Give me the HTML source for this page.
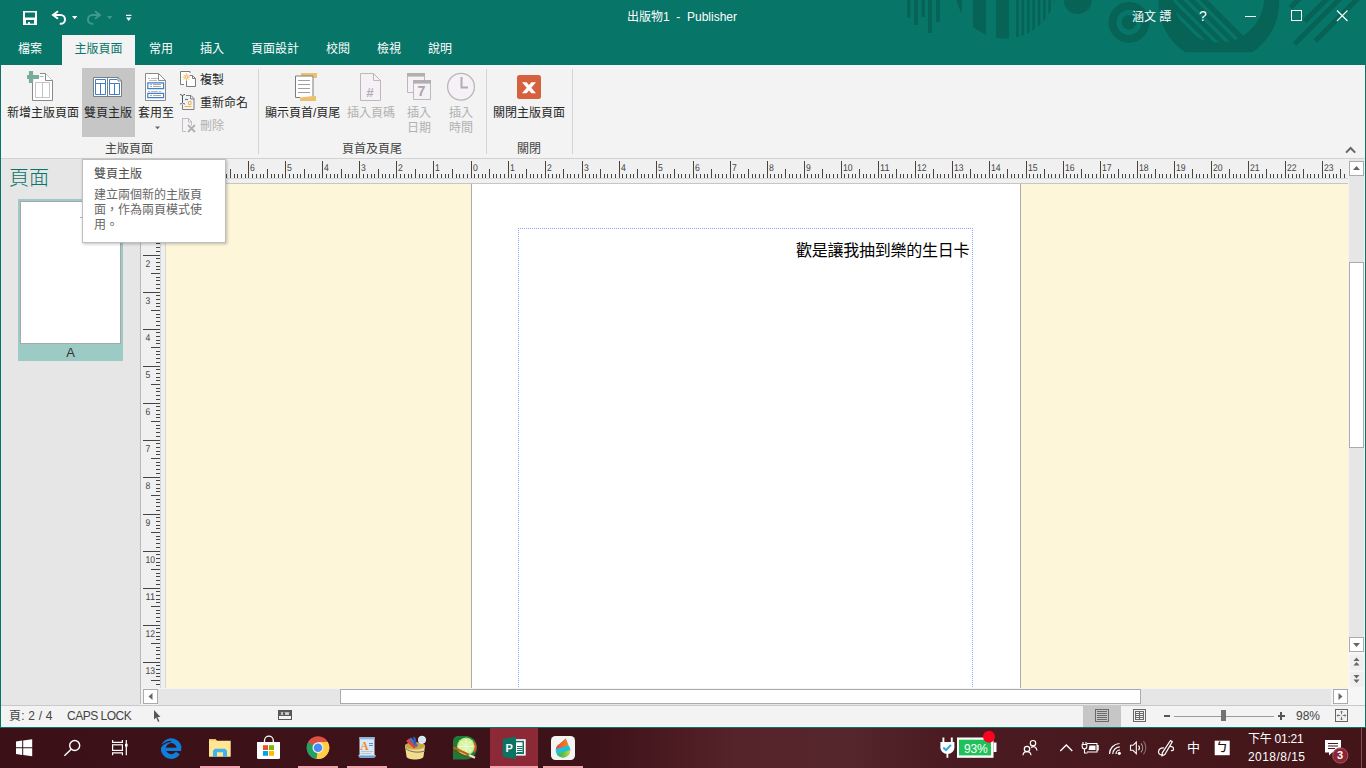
<!DOCTYPE html>
<html lang="zh-Hant">
<head>
<meta charset="utf-8">
<title>出版物1 - Publisher</title>
<style>
html,body{margin:0;padding:0;}
body{width:1366px;height:768px;overflow:hidden;position:relative;background:#f3f3f3;
 font-family:"Liberation Sans","Noto Sans CJK TC",sans-serif;font-size:12px;color:#262626;}
.abs{position:absolute;}
svg{position:absolute;left:0;top:0;overflow:visible;}
#titlebar{left:0;top:0;width:1366px;height:65px;background:#077568;overflow:hidden;}
#titlebar .t{position:absolute;color:#fff;white-space:nowrap;line-height:14px;}
.tab{position:absolute;top:35px;height:30px;line-height:29px;color:#fff;font-size:12px;text-align:center;white-space:nowrap;}
.tab.act{background:#f3f3f3;color:#077568;}
#ribbon{left:1px;top:65px;width:1364px;height:93px;background:#f3f3f3;border-bottom:1px solid #d2d2d2;}
.rl{position:absolute;white-space:nowrap;font-size:12px;color:#262626;line-height:14px;}
.rl.dis{color:#b1b1b1;}
.rl.c{text-align:center;}
.gl{position:absolute;top:142px;font-size:12px;color:#444;white-space:nowrap;line-height:14px;}
.sep{position:absolute;top:69px;width:1px;height:85px;background:#d4d4d4;}
#pages{left:1px;top:159px;width:139px;height:546px;background:#e6e6e6;}
#canvas{left:166px;top:184px;width:1182px;height:504px;background:#fef6d9;overflow:hidden;}
#status{left:1px;top:705px;width:1364px;height:22px;background:#f3f3f3;}
.st{position:absolute;font-size:12px;color:#444;white-space:nowrap;line-height:14px;}
#taskbar{left:0;top:728px;width:1366px;height:40px;background:linear-gradient(90deg,#3b1117 0%,#3e1219 44%,#4c1c22 50%,#54242a 54%,#55262b 62%,#4a1b20 69%,#431519 100%);overflow:hidden;}
.tk{position:absolute;color:#fff;white-space:nowrap;}
.ul{position:absolute;top:38px;height:2px;background:#f2a3b0;}
.rn{text-rendering:geometricPrecision;font-size:9.8px;fill:#444;font-family:"Liberation Sans",sans-serif;}
</style>
</head>
<body>
<!-- TITLEBAR -->
<div id="titlebar" class="abs">
  <svg width="1366" height="65" viewBox="0 0 1366 65">
    <g fill="#066356">
      <!-- vertical bars -->
      <rect x="907" y="0" width="3.5" height="17.5"/><rect x="914" y="0" width="4" height="25"/>
      <rect x="921.5" y="0" width="3.5" height="17"/><rect x="928" y="0" width="4" height="33"/><rect x="936" y="0" width="4" height="22"/>
      <!-- striped disc -->
      <clipPath id="cd"><circle cx="1005.5" cy="-12" r="50.5"/></clipPath>
      <g clip-path="url(#cd)">
        <polygon points="955,0 962,0 962,16"/>
        <rect x="973" y="0" width="13" height="40"/><rect x="996" y="0" width="13" height="40"/>
        <rect x="1016" y="0" width="2.6" height="40"/><rect x="1021.6" y="0" width="2.6" height="40"/><rect x="1027" y="0" width="2.6" height="40"/>
        <rect x="1032.4" y="0" width="2.6" height="40"/><rect x="1037.8" y="0" width="2.6" height="40"/><rect x="1043" y="0" width="2.6" height="40"/>
        <rect x="1048.4" y="0" width="2.6" height="40"/><rect x="1053.6" y="0" width="2.6" height="40"/>
      </g>
      <circle cx="1077.7" cy="0" r="14"/>
      <!-- target -->
      <path fill-rule="evenodd" d="M1129 2a20.4 20.4 0 1 0 .01 0zM1129 9.8a12.6 12.6 0 1 1 -.01 0z"/>
      <circle cx="1129" cy="22.4" r="7.3"/>
      <!-- bowl -->
      <clipPath id="cb"><rect x="1150" y="0" width="140" height="52.3"/></clipPath>
      <clipPath id="cin"><circle cx="1218.8" cy="-3" r="45.6"/></clipPath>
      <g clip-path="url(#cb)">
        <circle cx="1218.8" cy="2.1" r="60.4"/>
        <g clip-path="url(#cin)">
          <polygon points="1207.3,0 1300,0 1300,92.7" fill="#077568"/>
          <g stroke="#077568" stroke-width="3.5" fill="none">
            <path d="M1140.800 -10L1240.800 90M1152.400 -10L1252.400 90M1164 -10L1264 90M1175.600 -10L1275.600 90M1187.300 -10L1287.300 90"/>
          </g>
        </g>
      </g>
    </g>
    <!-- right diagonals -->
    <g stroke="#066356" stroke-width="5" fill="none">
      <path d="M1300 -2L1290.500 7.500M1328 -2L1304.500 21.500M1340.600 -2L1294.600 44M1358.300 -2L1315.300 41"/>
    </g>
    <!-- QAT icons -->
    <rect x="23" y="11" width="14" height="14" fill="#fff"/>
    <rect x="25" y="12.500" width="10" height="5" fill="#077568"/>
    <rect x="26" y="20" width="8" height="3.600" fill="#077568"/>
    <rect x="28" y="22" width="2" height="2" fill="#fff"/>
    <g fill="none" stroke="#fff" stroke-width="2">
      <path d="M58 11.200L53 15l5 3.800"/>
      <path d="M54 15h6.600a4.400 4.400 0 0 1 0 8.800h-.8"/>
    </g>
    <g fill="none" stroke="#3f9a8c" stroke-width="2">
      <path d="M95 11.200L100 15l-5 3.800"/>
      <path d="M99 15h-6.600a4.400 4.400 0 0 0 0 8.800h.8"/>
    </g>
    <path fill="#fff" d="M72 16h5.400l-2.700 3.200z"/>
    <path fill="#3f9a8c" d="M107 16h5.400l-2.700 3.200z"/>
    <path fill="#fff" d="M126 14.800h5.400v1.300h-5.400zM126 17.600h5.400l-2.700 3.400z"/>
    <!-- window controls -->
    <g stroke="#fff" stroke-width="1" fill="none" shape-rendering="crispEdges">
      <path d="M1245 16.500h11"/>
      <rect x="1291.500" y="10.500" width="10" height="10"/>
    </g>
    <path d="M1337 10.500l10.500 10.500M1347.500 10.500l-10.500 10.500" stroke="#fff" stroke-width="1.100" fill="none"/>
  </svg>
  <div class="t" style="left:627px;top:10px;font-size:12px;">出版物1 &nbsp;- &nbsp;Publisher</div>
  <div class="t" style="left:1132px;top:10px;font-size:12px;">涵文 譚</div>
  <div class="t" style="left:1199px;top:9px;font-size:14px;">?</div>
  <div class="tab" style="left:17px;width:26px;">檔案</div>
  <div class="tab act" style="left:62px;width:73px;">主版頁面</div>
  <div class="tab" style="left:149px;width:24px;">常用</div>
  <div class="tab" style="left:200px;width:24px;">插入</div>
  <div class="tab" style="left:251px;width:48px;">頁面設計</div>
  <div class="tab" style="left:326px;width:24px;">校閱</div>
  <div class="tab" style="left:377px;width:24px;">檢視</div>
  <div class="tab" style="left:428px;width:24px;">說明</div>
</div>
<!-- RIBBON -->
<div id="ribbon" class="abs"></div>
<div class="abs" style="left:82px;top:68px;width:53px;height:69px;background:#c6c6c6;"></div>
<svg width="1366" height="160" viewBox="0 0 1366 160">
  <!-- new master page -->
  <g fill="none">
    <path d="M32.500 82V100.500h20V80.500l-7-7H40" stroke="#8a8a8a" stroke-width="1" fill="#fff"/>
    <path d="M45.500 73.500v7h7" stroke="#8a8a8a" fill="#fff"/>
    <path d="M35.500 82.500h14v15h-14zM42.500 82.500v15" stroke="#c4c4c4"/>
    <path d="M39.500 76.500h4" stroke="#b0b0b0"/>
    <path d="M31 71v12M27 77h12" stroke="#77ad9a" stroke-width="4.200"/>
  </g>
  <!-- two-page master -->
  <g fill="none">
    <path d="M93.500 77.500h24.500l3.500 3.500v15.500h-28z" fill="#fff" stroke="#7d7d7d"/>
    <path d="M107.500 77.500v19" stroke="#7d7d7d"/>
    <path d="M118 77.500v3.500h3.500" stroke="#7d7d7d"/>
    <g stroke="#3f7fcc" stroke-width="1">
      <path d="M95.500 79.500h10v15h-10zM95.500 83.500h10M100.500 83.500v11"/>
      <path d="M117 79.500h-7.500v15h10v-11.500M109.500 83.500h10M114.500 83.500v11"/>
    </g>
  </g>
  <!-- apply to -->
  <g fill="none">
    <path d="M145.500 73.500h13l7 7v20h-20z" fill="#fff" stroke="#8a8a8a"/>
    <path d="M158.500 73.500v7h7" stroke="#8a8a8a"/>
    <g stroke="#b9b9b9"><path d="M148 78.500h2M151 78.500h7M149 80.500h8M148 91.500h2M151 91.500h7M159 91.500h2"/></g>
    <path d="M147.800 82.800h15.800v5.800h-15.800zM147.800 93.300h15.800v4.400h-15.800z" stroke="#3f7fcc" stroke-width="1.200"/>
    <g stroke="#a9a9a9"><path d="M150 84.500h2M153 84.500h8M150 86.500h2M153 86.500h8M150 95.500h2M153 95.500h8"/></g>
  </g>
  <path d="M155 126.500h5l-2.500 2.800z" fill="#666"/>
  <!-- copy -->
  <g fill="none" stroke="#7d7d7d">
    <path d="M180.500 71.500h9.500v13h-9.500z" fill="#fff" stroke="none"/>
    <path d="M184 84.500h-3.500v-13h9.500M190 71.500v1.500" />
    <path d="M186.500 75.500h6l3 3v8h-9z" fill="#fff"/>
    <path d="M192.500 75.500v3h3" />
    <circle cx="186.300" cy="77" r="3.600" fill="#fff" stroke="none"/>
    <g stroke="#eeb04a" stroke-width=".9"><path d="M186.300 73.300v2.200M186.300 78.500v2.200M182.600 77h2.200M187.800 77h2.200M183.700 74.400l1.500 1.500M187.400 78.100l1.500 1.500M188.900 74.400l-1.500 1.500M185.200 78.100l-1.500 1.500"/><circle cx="186.300" cy="77" r="1.300" fill="none"/></g>
  </g>
  <!-- rename -->
  <g fill="none" stroke="#7d7d7d">
    <path d="M186 95.500h5l3 3v11h-11.500v-5"/>
    <path d="M190.500 95.500v3.500h3.500"/>
    <path d="M180 94.500q2 0 2.500 1.500q0.500 -1.500 2.500 -1.500M182.500 96v6.500M180 104q2 0 2.500 -1.500q0.500 1.500 2.500 1.500" stroke="#555"/>
    <path d="M185 99.500h3" stroke="#3f7fcc" stroke-width="1.200"/>
    <path d="M188.500 101.500h2.500v3h-2.500zM184.500 106.500h7" stroke="#eeb04a"/>
  </g>
  <!-- delete (disabled) -->
  <g fill="none" stroke="#bdbdbd">
    <path d="M182.500 118.500h6l3 3v10h-9z" fill="#f6f1f6" stroke="none"/>
    <path d="M186 131.500h-3.500v-13h6l3 3v4"/>
    <path d="M188.500 118.500v3.500h3.500"/>
    <path d="M188 125l7 7M195 125l-7 7" stroke="#b0b0b0" stroke-width="1.800"/>
  </g>
  <!-- show header/footer -->
  <g fill="none">
    <path d="M301 73h16v5h-3.500v-2h-12.500z" fill="#ecc06f"/>
    <rect x="300" y="96" width="16" height="5" fill="#ecc06f"/>
    <path d="M300 97.500h-4.500v-21.500h17.500v20" stroke="#7d7d7d" fill="#fff"/>
    <g stroke="#a0a0a0"><path d="M298 80.500h12M298 84.500h12M298 88.500h12M298 92.500h12"/></g>
  </g>
  <!-- insert page number (disabled) -->
  <g>
    <path d="M360.500 73.500h13l7 7v20h-20z" fill="#f6f1f6" stroke="#bdb8bd"/>
    <path d="M373.500 73.500v7h7" stroke="#bdb8bd" fill="none"/>
    <text x="366.200" y="96.700" font-family="Liberation Sans,sans-serif" font-weight="bold" font-size="13.500" fill="#b3aeb3">#</text>
  </g>
  <!-- insert date (disabled) -->
  <g>
    <path d="M407.500 73.500h17v19h-17z" fill="#f6f1f6" stroke="#bdb8bd"/>
    <rect x="407" y="73" width="18" height="3.600" fill="#b3aeb3"/>
    <path d="M413.500 80.500h17v19h-17z" fill="#f6f1f6" stroke="#bdb8bd"/>
    <rect x="413" y="80" width="18" height="3.600" fill="#b3aeb3"/>
    <text x="417.600" y="96.400" font-family="Liberation Sans,sans-serif" font-weight="bold" font-size="14.200" fill="#aaa5aa">7</text>
  </g>
  <!-- insert time (disabled) -->
  <g>
    <circle cx="461" cy="86.800" r="13.400" fill="#f6f1f6" stroke="#bab5ba" stroke-width="1.300"/>
    <path d="M461.500 77v10.500h6.500" fill="none" stroke="#b0abb0" stroke-width="2"/>
  </g>
  <!-- close master -->
  <g>
    <rect x="517" y="75" width="24" height="24" rx="2.500" fill="#d6613f"/>
    <path d="M522 82.300h4.600l9.400 10.900h-4.600z" fill="#fff"/><path d="M536 82.300h-4.600l-9.400 10.900h4.600z" fill="#fff"/>
  </g>
  <!-- collapse ribbon chevron -->
  <path d="M1346 152.600l4.600-4.600l4.600 4.600" fill="none" stroke="#666" stroke-width="2"/>
</svg>
<div class="rl" style="left:7px;top:106px;">新增主版頁面</div>
<div class="rl" style="left:84px;top:106px;">雙頁主版</div>
<div class="rl" style="left:138px;top:106px;">套用至</div>
<div class="rl" style="left:200px;top:73px;">複製</div>
<div class="rl" style="left:200px;top:96px;">重新命名</div>
<div class="rl dis" style="left:200px;top:119px;">刪除</div>
<div class="rl" style="left:265px;top:106px;">顯示頁首/頁尾</div>
<div class="rl dis" style="left:347px;top:106px;">插入頁碼</div>
<div class="rl dis c" style="left:407px;top:106px;line-height:15px;">插入<br>日期</div>
<div class="rl dis c" style="left:449px;top:106px;line-height:15px;">插入<br>時間</div>
<div class="rl" style="left:493px;top:106px;">關閉主版頁面</div>
<div class="gl" style="left:105px;">主版頁面</div>
<div class="gl" style="left:342px;">頁首及頁尾</div>
<div class="gl" style="left:517px;">關閉</div>
<div class="sep" style="left:258px;"></div>
<div class="sep" style="left:486px;"></div>
<div class="sep" style="left:572px;"></div>
<!-- PAGES PANEL -->
<div id="pages" class="abs">
  <div class="abs" style="left:8px;top:7px;font-size:20px;line-height:24px;color:#077568;font-weight:300;white-space:nowrap;">頁面</div>
  <div class="abs" style="left:17px;top:40px;width:105px;height:162px;background:#9bcbc4;"></div>
  <div class="abs" style="left:19px;top:42px;width:101px;height:143px;background:#fff;border:1px solid #a8a8a8;box-sizing:border-box;"></div>
  <div class="abs" style="left:17px;top:186px;width:105px;height:16px;line-height:15px;text-align:center;font-size:13px;color:#333;">A</div>
  <div class="abs" style="left:79px;top:58px;width:4px;height:1px;background:#b0b0b0;"></div>
</div>
<!-- RULERS -->
<div class="abs" style="left:141px;top:159px;width:1207px;height:24px;background:#f0f0f0;border-bottom:1px solid #c6c6c6;"></div>
<div class="abs" style="left:166px;top:178px;width:1182px;height:1px;background:#d6d6d6;"></div>
<div class="abs" style="left:140px;top:159px;width:26px;height:545px;background:#f0f0f0;border-left:1px solid #b8b8b8;box-sizing:border-box;"></div>
<div class="abs" style="left:165px;top:184px;width:1px;height:504px;background:#d8d8d8;"></div>
<div class="abs" style="left:160px;top:184px;width:1px;height:504px;background:#d6d6d6;"></div>
<svg width="1366" height="768" viewBox="0 0 1366 768"><g stroke="#444" stroke-width="1" fill="none" shape-rendering="crispEdges">
<path d="M167.5 174V178M171.5 174V178M174.5 161V178M178.5 174V178M182.5 174V178M186.5 174V178M189.5 174V178M193.5 169V178M197.5 174V178M200.5 174V178M204.5 174V178M208.5 174V178M211.5 161V178M215.5 174V178M219.5 174V178M223.5 174V178M226.5 174V178M230.5 169V178M234.5 174V178M237.5 174V178M241.5 174V178M245.5 174V178M248.5 161V178M252.5 174V178M256.5 174V178M260.5 174V178M263.5 174V178M267.5 169V178M271.5 174V178M274.5 174V178M278.5 174V178M282.5 174V178M285.5 161V178M289.5 174V178M293.5 174V178M297.5 174V178M300.5 174V178M304.5 169V178M308.5 174V178M311.5 174V178M315.5 174V178M319.5 174V178M322.5 161V178M326.5 174V178M330.5 174V178M334.5 174V178M337.5 174V178M341.5 169V178M345.5 174V178M348.5 174V178M352.5 174V178M356.5 174V178M359.5 161V178M363.5 174V178M367.5 174V178M371.5 174V178M374.5 174V178M378.5 169V178M382.5 174V178M385.5 174V178M389.5 174V178M393.5 174V178M396.5 161V178M400.5 174V178M404.5 174V178M408.5 174V178M411.5 174V178M415.5 169V178M419.5 174V178M422.5 174V178M426.5 174V178M430.5 174V178M433.5 161V178M437.5 174V178M441.5 174V178M445.5 174V178M448.5 174V178M452.5 169V178M456.5 174V178M459.5 174V178M463.5 174V178M467.5 174V178M471.5 161V178M474.5 174V178M478.5 174V178M482.5 174V178M485.5 174V178M489.5 169V178M493.5 174V178M496.5 174V178M500.5 174V178M504.5 174V178M508.5 161V178M511.5 174V178M515.5 174V178M519.5 174V178M522.5 174V178M526.5 169V178M530.5 174V178M533.5 174V178M537.5 174V178M541.5 174V178M545.5 161V178M548.5 174V178M552.5 174V178M556.5 174V178M559.5 174V178M563.5 169V178M567.5 174V178M570.5 174V178M574.5 174V178M578.5 174V178M582.5 161V178M585.5 174V178M589.5 174V178M593.5 174V178M596.5 174V178M600.5 169V178M604.5 174V178M607.5 174V178M611.5 174V178M615.5 174V178M619.5 161V178M622.5 174V178M626.5 174V178M630.5 174V178M633.5 174V178M637.5 169V178M641.5 174V178M644.5 174V178M648.5 174V178M652.5 174V178M656.5 161V178M659.5 174V178M663.5 174V178M667.5 174V178M670.5 174V178M674.5 169V178M678.5 174V178M681.5 174V178M685.5 174V178M689.5 174V178M693.5 161V178M696.5 174V178M700.5 174V178M704.5 174V178M707.5 174V178M711.5 169V178M715.5 174V178M718.5 174V178M722.5 174V178M726.5 174V178M730.5 161V178M733.5 174V178M737.5 174V178M741.5 174V178M744.5 174V178M748.5 169V178M752.5 174V178M755.5 174V178M759.5 174V178M763.5 174V178M767.5 161V178M770.5 174V178M774.5 174V178M778.5 174V178M781.5 174V178M785.5 169V178M789.5 174V178M792.5 174V178M796.5 174V178M800.5 174V178M804.5 161V178M807.5 174V178M811.5 174V178M815.5 174V178M818.5 174V178M822.5 169V178M826.5 174V178M829.5 174V178M833.5 174V178M837.5 174V178M841.5 161V178M844.5 174V178M848.5 174V178M852.5 174V178M855.5 174V178M859.5 169V178M863.5 174V178M866.5 174V178M870.5 174V178M874.5 174V178M878.5 161V178M881.5 174V178M885.5 174V178M889.5 174V178M892.5 174V178M896.5 169V178M900.5 174V178M903.5 174V178M907.5 174V178M911.5 174V178M915.5 161V178M918.5 174V178M922.5 174V178M926.5 174V178M929.5 174V178M933.5 169V178M937.5 174V178M940.5 174V178M944.5 174V178M948.5 174V178M952.5 161V178M955.5 174V178M959.5 174V178M963.5 174V178M966.5 174V178M970.5 169V178M974.5 174V178M977.5 174V178M981.5 174V178M985.5 174V178M989.5 161V178M992.5 174V178M996.5 174V178M1000.5 174V178M1003.5 174V178M1007.5 169V178M1011.5 174V178M1014.5 174V178M1018.5 174V178M1022.5 174V178M1026.5 161V178M1029.5 174V178M1033.5 174V178M1037.5 174V178M1040.5 174V178M1044.5 169V178M1048.5 174V178M1051.5 174V178M1055.5 174V178M1059.5 174V178M1063.5 161V178M1066.5 174V178M1070.5 174V178M1074.5 174V178M1077.5 174V178M1081.5 169V178M1085.5 174V178M1088.5 174V178M1092.5 174V178M1096.5 174V178M1100.5 161V178M1103.5 174V178M1107.5 174V178M1111.5 174V178M1114.5 174V178M1118.5 169V178M1122.5 174V178M1125.5 174V178M1129.5 174V178M1133.5 174V178M1137.5 161V178M1140.5 174V178M1144.5 174V178M1148.5 174V178M1151.5 174V178M1155.5 169V178M1159.5 174V178M1162.5 174V178M1166.5 174V178M1170.5 174V178M1174.5 161V178M1177.5 174V178M1181.5 174V178M1185.5 174V178M1188.5 174V178M1192.5 169V178M1196.5 174V178M1199.5 174V178M1203.5 174V178M1207.5 174V178M1211.5 161V178M1214.5 174V178M1218.5 174V178M1222.5 174V178M1225.5 174V178M1229.5 169V178M1233.5 174V178M1236.5 174V178M1240.5 174V178M1244.5 174V178M1248.5 161V178M1251.5 174V178M1255.5 174V178M1259.5 174V178M1262.5 174V178M1266.5 169V178M1270.5 174V178M1273.5 174V178M1277.5 174V178M1281.5 174V178M1285.5 161V178M1288.5 174V178M1292.5 174V178M1296.5 174V178M1299.5 174V178M1303.5 169V178M1307.5 174V178M1310.5 174V178M1314.5 174V178M1318.5 174V178M1322.5 161V178M1325.5 174V178M1329.5 174V178M1333.5 174V178M1336.5 174V178M1340.5 169V178M1344.5 174V178"/>
<path d="M156 188.5H160M156 192.5H160M156 195.5H160M151 199.5H160M156 203.5H160M156 206.5H160M156 210.5H160M156 214.5H160M143 218.5H160M156 221.5H160M156 225.5H160M156 229.5H160M156 232.5H160M151 236.5H160M156 240.5H160M156 243.5H160M156 247.5H160M156 251.5H160M143 255.5H160M156 258.5H160M156 262.5H160M156 266.5H160M156 269.5H160M151 273.5H160M156 277.5H160M156 280.5H160M156 284.5H160M156 288.5H160M143 292.5H160M156 295.5H160M156 299.5H160M156 303.5H160M156 306.5H160M151 310.5H160M156 314.5H160M156 317.5H160M156 321.5H160M156 325.5H160M143 329.5H160M156 332.5H160M156 336.5H160M156 340.5H160M156 343.5H160M151 347.5H160M156 351.5H160M156 354.5H160M156 358.5H160M156 362.5H160M143 366.5H160M156 369.5H160M156 373.5H160M156 377.5H160M156 380.5H160M151 384.5H160M156 388.5H160M156 391.5H160M156 395.5H160M156 399.5H160M143 403.5H160M156 406.5H160M156 410.5H160M156 414.5H160M156 417.5H160M151 421.5H160M156 425.5H160M156 428.5H160M156 432.5H160M156 436.5H160M143 440.5H160M156 443.5H160M156 447.5H160M156 451.5H160M156 454.5H160M151 458.5H160M156 462.5H160M156 465.5H160M156 469.5H160M156 473.5H160M143 477.5H160M156 480.5H160M156 484.5H160M156 488.5H160M156 491.5H160M151 495.5H160M156 499.5H160M156 502.5H160M156 506.5H160M156 510.5H160M143 514.5H160M156 517.5H160M156 521.5H160M156 525.5H160M156 528.5H160M151 532.5H160M156 536.5H160M156 539.5H160M156 543.5H160M156 547.5H160M143 551.5H160M156 554.5H160M156 558.5H160M156 562.5H160M156 565.5H160M151 569.5H160M156 573.5H160M156 576.5H160M156 580.5H160M156 584.5H160M143 588.5H160M156 591.5H160M156 595.5H160M156 599.5H160M156 602.5H160M151 606.5H160M156 610.5H160M156 613.5H160M156 617.5H160M156 621.5H160M143 625.5H160M156 628.5H160M156 632.5H160M156 636.5H160M156 639.5H160M151 643.5H160M156 647.5H160M156 650.5H160M156 654.5H160M156 658.5H160M143 662.5H160M156 665.5H160M156 669.5H160M156 673.5H160M156 676.5H160M151 680.5H160M156 684.5H160"/>
</g>
<text class="rn" x="176.0" y="171" textLength="4.8" lengthAdjust="spacingAndGlyphs">8</text>
<text class="rn" x="213.0" y="171" textLength="4.8" lengthAdjust="spacingAndGlyphs">7</text>
<text class="rn" x="250.0" y="171" textLength="4.8" lengthAdjust="spacingAndGlyphs">6</text>
<text class="rn" x="287.0" y="171" textLength="4.8" lengthAdjust="spacingAndGlyphs">5</text>
<text class="rn" x="324.0" y="171" textLength="4.8" lengthAdjust="spacingAndGlyphs">4</text>
<text class="rn" x="361.0" y="171" textLength="4.8" lengthAdjust="spacingAndGlyphs">3</text>
<text class="rn" x="398.0" y="171" textLength="4.8" lengthAdjust="spacingAndGlyphs">2</text>
<text class="rn" x="435.0" y="171" textLength="4.8" lengthAdjust="spacingAndGlyphs">1</text>
<text class="rn" x="473.0" y="171" textLength="4.8" lengthAdjust="spacingAndGlyphs">0</text>
<text class="rn" x="510.0" y="171" textLength="4.8" lengthAdjust="spacingAndGlyphs">1</text>
<text class="rn" x="547.0" y="171" textLength="4.8" lengthAdjust="spacingAndGlyphs">2</text>
<text class="rn" x="584.0" y="171" textLength="4.8" lengthAdjust="spacingAndGlyphs">3</text>
<text class="rn" x="621.0" y="171" textLength="4.8" lengthAdjust="spacingAndGlyphs">4</text>
<text class="rn" x="658.0" y="171" textLength="4.8" lengthAdjust="spacingAndGlyphs">5</text>
<text class="rn" x="695.0" y="171" textLength="4.8" lengthAdjust="spacingAndGlyphs">6</text>
<text class="rn" x="732.0" y="171" textLength="4.8" lengthAdjust="spacingAndGlyphs">7</text>
<text class="rn" x="769.0" y="171" textLength="4.8" lengthAdjust="spacingAndGlyphs">8</text>
<text class="rn" x="806.0" y="171" textLength="4.8" lengthAdjust="spacingAndGlyphs">9</text>
<text class="rn" x="843.0" y="171" textLength="9.6" lengthAdjust="spacingAndGlyphs">10</text>
<text class="rn" x="880.0" y="171" textLength="9.6" lengthAdjust="spacingAndGlyphs">11</text>
<text class="rn" x="917.0" y="171" textLength="9.6" lengthAdjust="spacingAndGlyphs">12</text>
<text class="rn" x="954.0" y="171" textLength="9.6" lengthAdjust="spacingAndGlyphs">13</text>
<text class="rn" x="991.0" y="171" textLength="9.6" lengthAdjust="spacingAndGlyphs">14</text>
<text class="rn" x="1028.0" y="171" textLength="9.6" lengthAdjust="spacingAndGlyphs">15</text>
<text class="rn" x="1065.0" y="171" textLength="9.6" lengthAdjust="spacingAndGlyphs">16</text>
<text class="rn" x="1102.0" y="171" textLength="9.6" lengthAdjust="spacingAndGlyphs">17</text>
<text class="rn" x="1139.0" y="171" textLength="9.6" lengthAdjust="spacingAndGlyphs">18</text>
<text class="rn" x="1176.0" y="171" textLength="9.6" lengthAdjust="spacingAndGlyphs">19</text>
<text class="rn" x="1213.0" y="171" textLength="9.6" lengthAdjust="spacingAndGlyphs">20</text>
<text class="rn" x="1250.0" y="171" textLength="9.6" lengthAdjust="spacingAndGlyphs">21</text>
<text class="rn" x="1287.0" y="171" textLength="9.6" lengthAdjust="spacingAndGlyphs">22</text>
<text class="rn" x="1324.0" y="171" textLength="9.6" lengthAdjust="spacingAndGlyphs">23</text>
<text class="rn" x="145.5" y="230.0" textLength="4.8" lengthAdjust="spacingAndGlyphs">1</text>
<text class="rn" x="145.5" y="267.0" textLength="4.8" lengthAdjust="spacingAndGlyphs">2</text>
<text class="rn" x="145.5" y="304.0" textLength="4.8" lengthAdjust="spacingAndGlyphs">3</text>
<text class="rn" x="145.5" y="341.0" textLength="4.8" lengthAdjust="spacingAndGlyphs">4</text>
<text class="rn" x="145.5" y="378.0" textLength="4.8" lengthAdjust="spacingAndGlyphs">5</text>
<text class="rn" x="145.5" y="415.0" textLength="4.8" lengthAdjust="spacingAndGlyphs">6</text>
<text class="rn" x="145.5" y="452.0" textLength="4.8" lengthAdjust="spacingAndGlyphs">7</text>
<text class="rn" x="145.5" y="489.0" textLength="4.8" lengthAdjust="spacingAndGlyphs">8</text>
<text class="rn" x="145.5" y="526.0" textLength="4.8" lengthAdjust="spacingAndGlyphs">9</text>
<text class="rn" x="145.5" y="563.0" textLength="9.6" lengthAdjust="spacingAndGlyphs">10</text>
<text class="rn" x="145.5" y="600.0" textLength="9.6" lengthAdjust="spacingAndGlyphs">11</text>
<text class="rn" x="145.5" y="637.0" textLength="9.6" lengthAdjust="spacingAndGlyphs">12</text>
<text class="rn" x="145.5" y="674.0" textLength="9.6" lengthAdjust="spacingAndGlyphs">13</text>
</svg>
<!-- CANVAS -->
<div id="canvas" class="abs">
  <div class="abs" style="left:305px;top:-4px;width:550px;height:520px;background:#fff;border-left:1px solid #ababab;border-right:1px solid #ababab;box-sizing:border-box;"></div>
  <svg width="1182" height="505" viewBox="166 184 1182 505">
    <g stroke="#8da3ff" stroke-width="1" fill="none" stroke-dasharray="1 1" shape-rendering="crispEdges">
      <path d="M518 228.500H973M518.500 228V690M972.500 228V690"/>
    </g>
  </svg>
  <div class="abs" style="left:630px;top:57px;font-family:'Liberation Sans','Noto Sans CJK TC',sans-serif;font-size:16px;line-height:20px;color:#000;white-space:nowrap;letter-spacing:-0.25px;">歡是讓我抽到樂的生日卡</div>
</div>
<!-- SCROLLBARS -->
<div class="abs" style="left:1349px;top:159px;width:15px;height:478px;background:#e6e6e6;"></div>
<div class="abs" style="left:1348px;top:637px;width:17px;height:68px;background:#f6f6f6;"></div>
<div class="abs" style="left:141px;top:688px;width:1207px;height:17px;background:#f3f3f3;"></div>
<div class="abs" style="left:158px;top:689px;width:1173px;height:16px;background:#e6e6e6;"></div>
<div class="abs" style="left:1350px;top:655px;width:14px;height:15px;background:#efefef;"></div>
<div class="abs" style="left:1350px;top:672px;width:14px;height:15px;background:#efefef;"></div>
<div class="abs" style="left:1349px;top:262px;width:15px;height:186px;background:#fff;border:1px solid #ababab;box-sizing:border-box;"></div>
<div class="abs" style="left:340px;top:689px;width:801px;height:15px;background:#fff;border:1px solid #ababab;box-sizing:border-box;"></div>
<div class="abs" style="left:1349px;top:161px;width:15px;height:15px;background:#fff;border:1px solid #ababab;box-sizing:border-box;"></div>
<div class="abs" style="left:1349px;top:637px;width:15px;height:15px;background:#fff;border:1px solid #ababab;box-sizing:border-box;"></div>
<div class="abs" style="left:143px;top:689px;width:15px;height:15px;background:#fff;border:1px solid #ababab;box-sizing:border-box;"></div>
<div class="abs" style="left:1333px;top:689px;width:15px;height:15px;background:#fff;border:1px solid #ababab;box-sizing:border-box;"></div>
<svg width="1366" height="768" viewBox="0 0 1366 768">
  <g fill="#666">
    <path d="M1353 170h7l-3.500-4z"/>
    <path d="M1353 643h7l-3.500 4z"/>
    <path d="M152.500 693v7l-4-3.500z"/>
    <path d="M1338.500 693v7l4-3.500z"/>
    <path d="M1353.500 661h6l-3-3.500zM1353.500 665.500h6l-3-3.500z"/>
    <path d="M1353.500 675h6l-3 3.500zM1353.500 679.500h6l-3 3.500z"/>
  </g>
</svg>
<!-- TOOLTIP -->
<div class="abs" style="left:82px;top:159px;width:144px;height:84px;background:#fff;border:1px solid #bebebe;box-sizing:border-box;box-shadow:1px 1px 3px rgba(0,0,0,0.25);">
  <div class="abs" style="left:11px;top:7px;font-size:12px;line-height:15px;color:#4a4a4a;white-space:nowrap;">雙頁主版</div>
  <div class="abs" style="left:11px;top:28px;width:120px;font-size:12px;line-height:15px;color:#666;">建立兩個新的主版頁面，作為兩頁模式使用。</div>
</div>
<!-- STATUS BAR -->
<div id="status" class="abs">
  <div class="abs" style="left:1082px;top:1px;width:38px;height:21px;background:#c6c6c6;"></div>
  <div class="st" style="left:8px;top:4px;letter-spacing:0.2px;">頁: 2 / 4</div>
  <div class="st" style="left:66px;top:4px;letter-spacing:-0.5px;">CAPS LOCK</div>
  <div class="st" style="left:1295px;top:4px;">98%</div>
</div>
<div class="abs" style="left:1px;top:705px;width:1364px;height:1px;background:#c9c9c9;"></div>
<svg width="1366" height="768" viewBox="0 0 1366 768">
  <!-- cursor -->
  <path d="M154 710v9.600l2.200-2l1.900 4.300l1.300-.6l-1.900-4.200h3z" fill="#555"/>
  <!-- macro icon -->
  <g shape-rendering="crispEdges"><rect x="278.500" y="710.500" width="13" height="9" fill="#f3f3f3" stroke="#555"/><rect x="279" y="711" width="12" height="5" fill="#5a5a5a"/></g>
  <path d="M281 712l2 3M283 712l-2 3M285 712l1 3l1-3l1 3l1-3" stroke="#f3f3f3" stroke-width=".8" fill="none"/>
  <!-- view icons -->
  <g shape-rendering="crispEdges" fill="none" stroke="#6a6a6a">
    <rect x="1095.500" y="709.500" width="13" height="12"/>
    <path d="M1097 711.500h10M1097 713.500h10M1097 715.500h10M1097 717.500h10M1097 719.500h10"/>
    <rect x="1133.500" y="709.500" width="12" height="12"/>
    <rect x="1135" y="711" width="9" height="9" fill="#6a6a6a" stroke="none"/>
    <path d="M1136 712.500h3M1140 712.500h3M1136 714.500h3M1140 714.500h3M1136 716.500h3M1140 716.500h3M1136 718.500h3M1140 718.500h3" stroke="#f3f3f3"/>
    <path d="M1174 716.500h100" stroke="#9a9a9a"/>
    <rect x="1221" y="710" width="5" height="11" fill="#737373" stroke="none"/>
    <rect x="1164" y="715" width="6" height="2" fill="#555" stroke="none"/>
    <rect x="1278" y="715" width="7" height="2" fill="#555" stroke="none"/>
    <rect x="1280" y="712" width="2" height="8" fill="#555" stroke="none"/>
    <rect x="1335.500" y="709.500" width="12" height="12" stroke="#666"/>
  </g>
  <path d="M1341.500 711v3.300M1341.500 720v-3.300M1337 715.500h3.300M1346 715.500h-3.300M1340.300 712.300l1.200-1.200l1.200 1.200M1340.300 718.700l1.200 1.200l1.200-1.200M1338.300 714.300l-1.200 1.200l1.200 1.200M1344.700 714.300l1.200 1.200l-1.200 1.200" stroke="#666" stroke-width=".9" fill="none"/>
</svg>
<!-- TASKBAR -->
<div id="taskbar" class="abs">
  <div class="abs" style="left:490px;top:0;width:48px;height:40px;background:#8b2a36;"></div>
  <div class="ul" style="left:200px;width:40px;"></div>
  <div class="ul" style="left:298px;width:40px;"></div>
  <div class="ul" style="left:347px;width:40px;"></div>
  <div class="ul" style="left:490px;width:48px;"></div>
  <div class="ul" style="left:543px;width:40px;"></div>
  <svg width="1366" height="40" viewBox="0 728 1366 40">
    <!-- windows logo -->
    <path fill="#fff" d="M16 741.500l6.200-.9v6.600h-6.200zM23.200 740.500l9-1.300v8h-9zM16 748.300h6.200v6.600l-6.200-.9zM23.200 748.300h9v8l-9-1.300z"/>
    <!-- search -->
    <g fill="none" stroke="#fff" stroke-width="1.400"><circle cx="74.700" cy="745.500" r="5"/><path d="M71.200 749.200l-6.800 6.600"/></g>
    <!-- task view -->
    <g fill="none" stroke="#fff" stroke-width="1.200">
      <rect x="112.600" y="744.800" width="9.800" height="5.600"/>
      <path d="M112.600 740v2.400h9.800v-2.400M112.600 755.200v-2.400h9.800v2.400M126.300 740v15.200"/>
      <rect x="125" y="743.800" width="2.600" height="2.800" fill="#fff" stroke="none"/>
    </g>
    <!-- edge -->
    <g>
      <path d="M177.800 753A7.900 7.900 0 1 1 179.100 748.200" stroke="#0e7fdc" stroke-width="4.800" fill="none"/>
      <rect x="166" y="747.700" width="15.200" height="3.300" fill="#0e7fdc"/>
      <path d="M160.600 747.200Q164.500 741.600 171.200 741.300" stroke="#3c1118" stroke-width="1.300" fill="none"/>
    </g>
    <!-- explorer -->
    <path fill="#ffe594" d="M209 739.300h6.500l1.500 1.500h13.700v16h-21.700z"/>
    <path fill="#f6cf5f" d="M209 739.300h6.500l1.500 1.500h-8z"/>
    <path fill="#3bb4ef" d="M213 756.800v-6l2-2h10l2 2v6h-4v-4.500h-6v4.500z"/>
    <!-- store -->
    <path fill="none" stroke="#fff" stroke-width="1.300" d="M264.500 742.500v-2a4.400 4.400 0 0 1 8.800 0v2"/>
    <path fill="#fff" d="M257 742h23v15.500a1.500 1.500 0 0 1-1.500 1.500h-20a1.500 1.500 0 0 1-1.500-1.500z"/>
    <rect x="263" y="745.200" width="5" height="4.800" fill="#f25022"/><rect x="269" y="745.200" width="5" height="4.800" fill="#7fba00"/>
    <rect x="263" y="751" width="5" height="4.800" fill="#00a4ef"/><rect x="269" y="751" width="5" height="4.800" fill="#ffb900"/>
    <!-- chrome -->
    <g>
      <circle cx="318" cy="747.700" r="11.300" fill="#dd4f43"/>
      <path d="M318 747.700L308.200 742.050A11.300 11.300 0 0 0 316.500 758.900L322 749z" fill="#1ea362"/>
      <path d="M318 747.700L316.500 758.900A11.300 11.300 0 0 0 327.800 742.050L318 742.050z" fill="#ffcd46"/>
      <path d="M308.200 742.050L318 747.700V742.050H327.800A11.300 11.300 0 0 0 308.200 742.050z" fill="#dd4f43"/>
      <circle cx="318" cy="747.700" r="5.500" fill="#f1f1f1"/>
      <circle cx="318" cy="747.700" r="4.300" fill="#4a8af4"/>
    </g>
    <!-- wordpad-like doc -->
    <g>
      <path d="M359.500 737h15v17.500l1.500 1.500l-2 1.800h-14l-1.800-2l1.300-1.300z" fill="#d9e9f7"/>
      <rect x="359.500" y="737" width="15" height="2.300" fill="#8db4dc"/>
      <path d="M358.200 755.500h17.500l-1.500 2.300h-14.500z" fill="#6f9ccb"/>
      <text x="360.300" y="749.500" font-family="Liberation Serif,serif" font-weight="bold" font-size="11.500" fill="#f08a24">A</text>
      <path d="M369 743.500h4M369 745.500h4" stroke="#5b8fd0" stroke-width="1"/>
      <path d="M361 751.500h12M361 753.500h10" stroke="#b8c4d2" stroke-width="1"/>
    </g>
    <!-- paint bucket -->
    <g>
      <path d="M405 746c0-2 4.500-3.500 10-3.500s10 1.500 10 3.500l-1.500 10.500c-.3 1.800-4 3-8.500 3s-8.200-1.200-8.500-3z" fill="#f2dc8c"/>
      <ellipse cx="415" cy="746" rx="10" ry="3.400" fill="#c9a64a"/>
      <path d="M406 748.500c3 3 11 5 19 2.500" stroke="#6b6b6b" stroke-width="1" fill="none"/>
      <path d="M406 741l3-2.500l8 8l-3 2z" fill="#d8453c"/>
      <path d="M409 739l2-1.500l7.500 8l-2 1.500z" fill="#3f74c9"/>
      <path d="M413 736.500l2.500 1l1 4.500l-2.500 4z" fill="#2f59b5"/>
      <path d="M421 741l-3.500 7" stroke="#d7a437" stroke-width="1.600"/>
      <circle cx="422" cy="739.800" r="3.600" fill="#cfe6f7" stroke="#eef6fc" stroke-width="1"/>
    </g>
    <!-- lime icon -->
    <g>
      <path d="M453 741a5 5 0 0 1 5-5h8c6 0 11 5 11 11.500s-5 12-11 12h-13z" fill="#1f7a3a"/>
      <circle cx="466" cy="746.500" r="9" fill="#b9e87a"/>
      <circle cx="466" cy="746.500" r="7.500" fill="#d6f39f"/>
      <path d="M466 739v15M458.500 746.500h15M460.700 741.200l10.600 10.600M471.300 741.200l-10.600 10.600" stroke="#f2fbdc" stroke-width=".9"/>
      <path d="M474 742c2 3 2 7 0 10" stroke="#e24a3a" stroke-width="1.600" fill="none"/>
      <path d="M453.500 747.500l20 9.500" stroke="#b4661c" stroke-width="2.200"/>
      <path d="M469 755l6 2.800" stroke="#e8e2d6" stroke-width="2.200"/>
      <path d="M453.500 750.500l14 6.500" stroke="#7c4312" stroke-width="1.200"/>
    </g>
    <!-- publisher -->
    <g>
      <path d="M516 739.200h9.700v16.400h-9.700z" fill="#fff"/>
      <path d="M516 740.800h8v13.300h-8z" fill="#0b7363"/>
      <path d="M516 742.300h6.500v10.400h-6.500z" fill="#fff"/>
      <path d="M517 746.500h5.500M517 748.500h5.500M517 750.500h5.500M517 752.500h5.500" stroke="#0b7363" stroke-width="1"/>
      <path d="M502.800 739l13.200-2.200v22.200l-13.200-2.200z" fill="#0b7363"/>
      <text x="505.600" y="752" font-family="Liberation Sans,sans-serif" font-weight="bold" font-size="11" fill="#fff">P</text>
    </g>
    <!-- medibang -->
    <g>
      <rect x="551" y="736" width="24" height="24" rx="4.500" fill="#f4f4f4"/>
      <linearGradient id="mbr" x1="0" y1="0" x2="1" y2="0"><stop offset="0" stop-color="#f23a2f"/><stop offset="1" stop-color="#fb9b1c"/></linearGradient>
      <linearGradient id="mbg" x1="0" y1="0" x2="1" y2="0"><stop offset="0" stop-color="#27ad4e"/><stop offset=".55" stop-color="#6cc04a"/><stop offset="1" stop-color="#f2e22c"/></linearGradient>
      <clipPath id="mb"><circle cx="563" cy="750.300" r="7.300"/><path d="M557 746L565.800 738.600L569 747z"/></clipPath>
      <g clip-path="url(#mb)">
        <rect x="554" y="736" width="18" height="24" fill="#1fc0d8"/>
        <path d="M554 736h18v8.500l-18 5z" fill="url(#mbr)"/>
        <path d="M554 755l18-5.500v11h-18z" fill="url(#mbg)"/>
      </g>
    </g>
    <!-- plug with check -->
    <g>
      <path d="M943.400 737.500v5M951.800 737.500v5" stroke="#fff" stroke-width="1.900"/>
      <path d="M940.400 742h14v5.500c0 3.500-3 6.500-7 6.500s-7-3-7-6.500z" fill="#fff"/>
      <path d="M947.400 753v4.800" stroke="#fff" stroke-width="1.800"/>
      <path d="M943.300 747.500l2.700 2.700l5-5.400" stroke="#2aa7e6" stroke-width="1.900" fill="none"/>
    </g>
    <!-- battery 93% -->
    <rect x="957" y="737.500" width="36.500" height="20.300" fill="#fff"/>
    <rect x="959" y="739.700" width="32" height="15.700" fill="#1fc15a"/>
    <rect x="993.500" y="742.500" width="3" height="9.500" fill="#fff"/>
    <circle cx="989" cy="736.800" r="6" fill="#fb0220"/>
    <!-- people -->
    <g fill="none" stroke="#fff" stroke-width="1.200">
      <circle cx="1033" cy="743.200" r="2.700"/><path d="M1031 747.500c3-2 5.500-.5 6 3"/>
      <circle cx="1027" cy="749" r="2.700"/><path d="M1023 755.300c.3-5 7.500-5 8 0"/>
    </g>
    <!-- chevron -->
    <path d="M1060.300 751l6-6l6 6" fill="none" stroke="#fff" stroke-width="1.300"/>
    <!-- battery plug small -->
    <g fill="none" stroke="#fff" stroke-width="1.100">
      <path d="M1087 743.500h10v8.500h-10M1097 745.500h1.200v4.500h-1.200"/>
      <path d="M1089.500 745.500h6v4.500h-7z" fill="#fff" stroke="none"/>
      <path d="M1083 742v2.500M1086 742v2.500M1082.200 744.500h4.600v2a2.300 2.300 0 0 1-4.600 0zM1084.500 749v4h3"/>
    </g>
    <!-- wifi -->
    <g fill="none" stroke="#fff" stroke-width="1.200">
      <path d="M1109.500 754a10.500 10.500 0 0 1 10-10.500"/><path d="M1112.800 754a7.200 7.200 0 0 1 7-7.200" /><path d="M1116 754a4 4 0 0 1 4-4"/>
      <circle cx="1119.300" cy="753.300" r="1.600" fill="#fff" stroke="none"/>
    </g>
    <!-- volume -->
    <g fill="none" stroke="#fff" stroke-width="1.100">
      <path d="M1130.500 745.300h2.500l3.300-3.300v11.600l-3.300-3.300h-2.500z"/>
      <path d="M1138.500 745.500a3.500 3.500 0 0 1 0 4.600"/><path d="M1141 743.300a7 7 0 0 1 0 9" stroke-opacity=".6"/><path d="M1143.500 741.200a10.500 10.500 0 0 1 0 13.200" stroke-opacity=".35"/>
    </g>
    <!-- pen -->
    <g fill="none" stroke="#fff" stroke-width="1.200">
      <path d="M1170.500 740.500l1.800 1.200l-7.500 12.800l-2.800 1.300l.3-3z"/>
      <path d="M1164 748c-3-.5-5.500 1-5.500 4c0 2.500 2.500 3.500 4.500 2.500M1169 746.500c3-.5 5 1 4.500 3c-.3 1-1.500 1.500-2.500 1"/>
    </g>
    <!-- IME box -->
    <rect x="1214.700" y="740.700" width="15" height="14.500" fill="#fff"/>
    <!-- notification -->
    <path d="M1325 740h16v12.500h-9l-3 3v-3h-4z" fill="#fff"/>
    <path d="M1328 743.500h10M1328 746h10M1328 748.500h7" stroke="#4d1820" stroke-width="1.100"/>
    <circle cx="1340.300" cy="755.500" r="7.600" fill="#8b2433" stroke="#a85a66" stroke-width="1"/>
    <path d="M1361.500 728v40" stroke="#7d5056" stroke-width="1"/>
  </svg>
  <div class="tk" style="left:964px;top:14px;font-size:12px;line-height:14px;letter-spacing:-0.2px;">93%</div>
  <div class="tk" style="left:1187px;top:12px;font-size:13px;line-height:16px;">中</div>
  <div class="tk" style="left:1216px;top:13px;font-size:12px;line-height:14px;color:#2a0c10;font-weight:500;">ㄅ</div>
  <div class="tk" style="left:1248px;top:4px;font-size:12px;line-height:14px;letter-spacing:-0.25px;">下午 01:21</div>
  <div class="tk" style="left:1248px;top:22px;font-size:12px;line-height:14px;letter-spacing:0.45px;">2018/8/15</div>
  <div class="tk" style="left:1337px;top:20px;font-size:11px;line-height:14px;font-weight:bold;">3</div>
</div>
<!-- window border -->
<div class="abs" style="left:0;top:0;width:1px;height:728px;background:#077568;"></div>
<div class="abs" style="left:1365px;top:0;width:1px;height:728px;background:#077568;"></div>
<div class="abs" style="left:0;top:727px;width:1366px;height:1px;background:#077568;"></div>
</body>
</html>
